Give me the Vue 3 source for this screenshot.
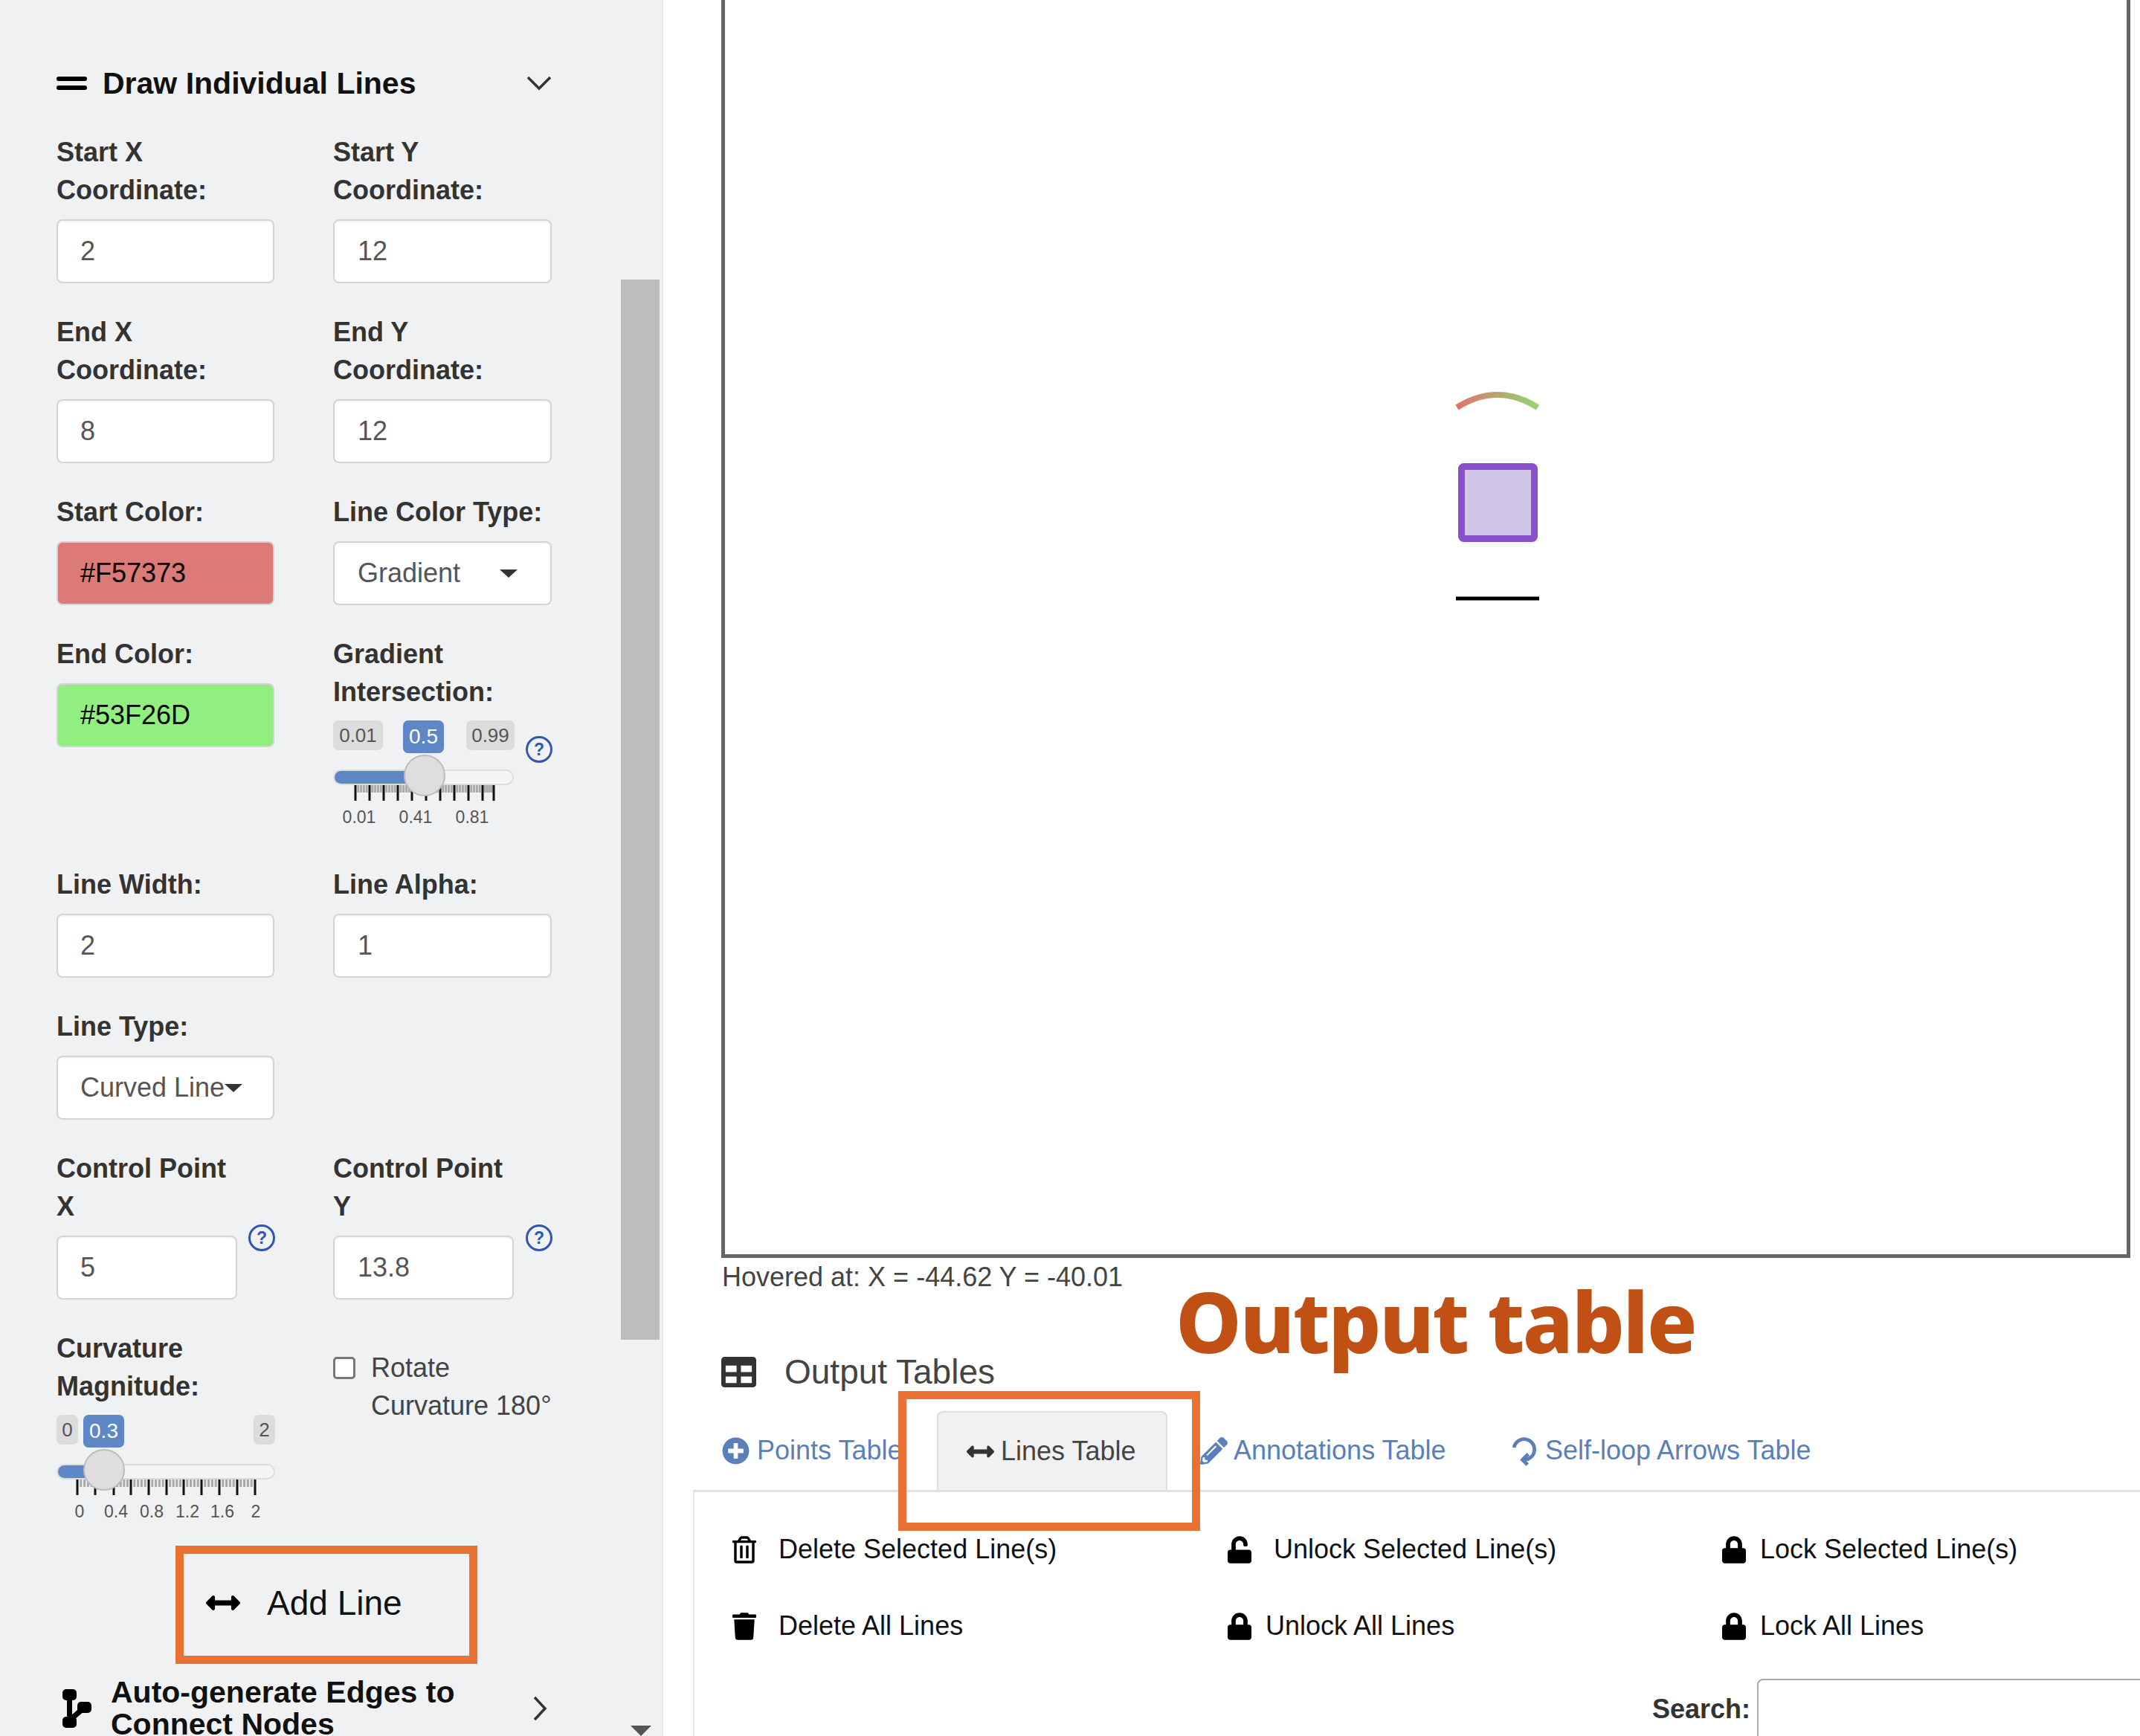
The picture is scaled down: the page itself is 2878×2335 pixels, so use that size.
<script setup>
const icons = {
  arrows: 'M377.941 169.941V216H134.059v-46.059c0-21.382-25.851-32.09-40.971-16.971L7.029 239.029c-9.373 9.373-9.373 24.568 0 33.941l86.059 86.059c15.119 15.119 40.971 4.411 40.971-16.971V296h243.882v46.059c0 21.382 25.851 32.09 40.971 16.971l86.059-86.059c9.373-9.373 9.373-24.568 0-33.941l-86.059-86.059c-15.119-15.12-40.971-4.412-40.971 16.97z',
  table: 'M464 32H48C21.49 32 0 53.49 0 80v352c0 26.51 21.49 48 48 48h416c26.51 0 48-21.49 48-48V80c0-26.51-21.49-48-48-48zM224 416H64v-96h160v96zm0-160H64v-96h160v96zm224 160H288v-96h160v96zm0-160H288v-96h160v96z',
  plus: 'M256 8C119 8 8 119 8 256s111 248 248 248 248-111 248-248S393 8 256 8zm144 276c0 6.6-5.4 12-12 12h-92v92c0 6.6-5.4 12-12 12h-56c-6.6 0-12-5.4-12-12v-92h-92c-6.6 0-12-5.4-12-12v-56c0-6.6 5.4-12 12-12h92v-92c0-6.6 5.4-12 12-12h56c6.6 0 12 5.4 12 12v92h92c6.6 0 12 5.4 12 12v56z',
  pencil: 'M497.9 142.1l-46.1 46.1c-4.7 4.7-12.3 4.7-17 0l-111-111c-4.7-4.7-4.7-12.3 0-17l46.1-46.1c18.7-18.7 49.1-18.7 67.9 0l60.1 60.1c18.8 18.7 18.8 49.1 0 67.9zM284.2 99.8L21.6 362.4.4 483.9c-2.9 16.4 11.4 30.6 27.8 27.8l121.5-21.3 262.6-262.6c4.7-4.7 4.7-12.3 0-17l-111-111c-4.8-4.7-12.4-4.7-17.1 0zM124.1 339.9c-5.5-5.5-5.5-14.3 0-19.8l154-154c5.5-5.5 14.3-5.5 19.8 0s5.5 14.3 0 19.8l-154 154c-5.5 5.5-14.3 5.5-19.8 0zM88 424h48v36.3l-64.5 11.3-31.1-31.1L51.7 376H88v48z',
  trash: 'M432 32H312l-9.4-18.7A24 24 0 0 0 281.1 0H166.8a23.72 23.72 0 0 0-21.4 13.3L136 32H16A16 16 0 0 0 0 48v32a16 16 0 0 0 16 16h416a16 16 0 0 0 16-16V48a16 16 0 0 0-16-16zM53.2 467a48 48 0 0 0 47.9 45h245.8a48 48 0 0 0 47.9-45L416 128H32z',
  trashO: 'M268 416h24a12 12 0 0 0 12-12V188a12 12 0 0 0-12-12h-24a12 12 0 0 0-12 12v216a12 12 0 0 0 12 12zM432 80h-82.41l-34-56.7A48 48 0 0 0 274.41 0H173.59a48 48 0 0 0-41.16 23.3L98.41 80H16A16 16 0 0 0 0 96v16a16 16 0 0 0 16 16h16v336a48 48 0 0 0 48 48h288a48 48 0 0 0 48-48V128h16a16 16 0 0 0 16-16V96a16 16 0 0 0-16-16zM171.84 50.91A6 6 0 0 1 177 48h94a6 6 0 0 1 5.15 2.91L293.61 80H154.39zM368 464H80V128h288zm-212-48h24a12 12 0 0 0 12-12V188a12 12 0 0 0-12-12h-24a12 12 0 0 0-12 12v216a12 12 0 0 0 12 12z',
  lock: 'M400 224h-24v-72C376 68.2 307.8 0 224 0S72 68.2 72 152v72H48c-26.5 0-48 21.5-48 48v192c0 26.5 21.5 48 48 48h352c26.5 0 48-21.5 48-48V272c0-26.5-21.5-48-48-48zm-104 0H152v-72c0-39.7 32.3-72 72-72s72 32.3 72 72v72z',
  unlock: 'M400 256H152V152.9c0-39.6 31.7-72.5 71.3-72.9 40-.4 72.7 32.1 72.7 72v16c0 13.3 10.7 24 24 24h32c13.3 0 24-10.7 24-24v-16C376 68 307.5-.3 223.5 0 139.5.3 72 69.5 72 153.5V256H48c-26.5 0-48 21.5-48 48v160c0 26.5 21.5 48 48 48h352c26.5 0 48-21.5 48-48V304c0-26.5-21.5-48-48-48z'
}

function minors(majors) {
  const out = []
  for (let i = 0; i < majors.length - 1; i++) {
    const step = (majors[i + 1] - majors[i]) / 5
    for (let j = 1; j < 5; j++) out.push(majors[i] + step * j)
  }
  return out
}

const gradMajors = [30, 49, 68, 87, 106, 125, 144, 163, 182, 201, 216]
const gradSlider = {
  width: 243, fill: 123, thumb: 95,
  badges: [
    { text: '0.01', left: 0, width: 67 },
    { text: '0.5', left: 94, width: 55, active: true },
    { text: '0.99', left: 179, width: 65 }
  ],
  majors: gradMajors, minors: minors(gradMajors),
  labels: [{ t: '0.01', x: 35 }, { t: '0.41', x: 111 }, { t: '0.81', x: 187 }]
}
const curvMajors = [28, 52, 77, 100, 124, 148, 171, 195, 219, 243, 267]
const curvSlider = {
  width: 294, fill: 64, thumb: 36,
  badges: [
    { text: '0', left: 0, width: 29 },
    { text: '0.3', left: 36, width: 55, active: true },
    { text: '2', left: 265, width: 29 }
  ],
  majors: curvMajors, minors: minors(curvMajors),
  labels: [{ t: '0', x: 31 }, { t: '0.4', x: 80 }, { t: '0.8', x: 128 }, { t: '1.2', x: 176 }, { t: '1.6', x: 223 }, { t: '2', x: 268 }]
}
const sliders = { gradSlider, curvSlider }
</script>

<template>
  <div class="page">
    <aside class="sidebar">
      <div class="scroll-thumb"></div>
      <div class="scroll-arrow"></div>

      <div class="section-head">
        <svg class="equals" viewBox="0 0 41 18"><rect x="0" y="0" width="41" height="6" rx="3" /><rect x="0" y="12" width="41" height="6" rx="3" /></svg>
        <span class="section-title">Draw Individual Lines</span>
        <svg class="chev-down" viewBox="0 0 34 20"><path d="M2 2 L17 17 L32 2" /></svg>
      </div>

      <div class="row first">
        <div><div class="label">Start X<br />Coordinate:</div><div class="field">2</div></div>
        <div class="col-two"><div class="label">Start Y<br />Coordinate:</div><div class="field">12</div></div>
      </div>
      <div class="row">
        <div><div class="label">End X<br />Coordinate:</div><div class="field">8</div></div>
        <div class="col-two"><div class="label">End Y<br />Coordinate:</div><div class="field">12</div></div>
      </div>
      <div class="row">
        <div><div class="label">Start Color:</div><div class="field color red">#F57373</div></div>
        <div class="col-two">
          <div class="label">Line Color Type:</div>
          <div class="field select"><span>Gradient</span><i class="caret far"></i></div>
        </div>
      </div>
      <div class="row">
        <div><div class="label">End Color:</div><div class="field color green">#53F26D</div></div>
        <div>
          <div class="label">Gradient<br />Intersection:</div>
          <div class="with-help slider-wrap">
            <div class="slider" :style="{ width: sliders.gradSlider.width + 'px' }">
              <span v-for="b in sliders.gradSlider.badges" :key="b.text" class="badge" :class="{ active: b.active }" :style="{ left: b.left + 'px', width: b.width + 'px' }">{{ b.text }}</span>
              <div class="track"><div class="fill" :style="{ width: sliders.gradSlider.fill + 'px' }"></div></div>
              <svg class="ticks" :width="sliders.gradSlider.width" height="21">
                <line v-for="x in sliders.gradSlider.minors" :key="x" :x1="x" :x2="x" y1="0" y2="10" class="minor" />
                <line v-for="x in sliders.gradSlider.majors" :key="x" :x1="x" :x2="x" y1="0" y2="21" class="major" />
              </svg>
              <div class="thumb" :style="{ left: sliders.gradSlider.thumb + 'px' }"></div>
              <span v-for="l in sliders.gradSlider.labels" :key="l.t" class="tick-label" :style="{ left: l.x + 'px' }">{{ l.t }}</span>
            </div>
            <span class="help slider-help">?</span>
          </div>
        </div>
      </div>
      <div class="row">
        <div><div class="label">Line Width:</div><div class="field">2</div></div>
        <div class="col-two"><div class="label">Line Alpha:</div><div class="field">1</div></div>
      </div>
      <div class="row">
        <div>
          <div class="label">Line Type:</div>
          <div class="field select tight"><span>Curved Line</span><i class="caret"></i></div>
        </div>
        <div></div>
      </div>
      <div class="row">
        <div>
          <div class="label">Control Point<br />X</div>
          <div class="with-help"><div class="field short">5</div><span class="help input-help">?</span></div>
        </div>
        <div class="col-two">
          <div class="label">Control Point<br />Y</div>
          <div class="with-help"><div class="field short">13.8</div><span class="help input-help">?</span></div>
        </div>
      </div>
      <div class="row">
        <div>
          <div class="label">Curvature<br />Magnitude:</div>
          <div class="slider curv" :style="{ width: sliders.curvSlider.width + 'px' }">
            <span v-for="b in sliders.curvSlider.badges" :key="b.text" class="badge" :class="{ active: b.active }" :style="{ left: b.left + 'px', width: b.width + 'px' }">{{ b.text }}</span>
            <div class="track"><div class="fill" :style="{ width: sliders.curvSlider.fill + 'px' }"></div></div>
            <svg class="ticks" :width="sliders.curvSlider.width" height="21">
              <line v-for="x in sliders.curvSlider.minors" :key="x" :x1="x" :x2="x" y1="0" y2="10" class="minor" />
              <line v-for="x in sliders.curvSlider.majors" :key="x" :x1="x" :x2="x" y1="0" y2="21" class="major" />
            </svg>
            <div class="thumb" :style="{ left: sliders.curvSlider.thumb + 'px' }"></div>
            <span v-for="l in sliders.curvSlider.labels" :key="l.t" class="tick-label" :style="{ left: l.x + 'px' }">{{ l.t }}</span>
          </div>
        </div>
        <div class="check-row">
          <span class="checkbox"></span>
          <span class="check-text">Rotate<br />Curvature 180°</span>
        </div>
      </div>

      <div class="add-line">
        <svg class="add-icon" viewBox="0 0 512 512"><path :d="icons.arrows" /></svg>
        <span>Add Line</span>
      </div>

      <div class="auto-head">
        <svg class="branch" viewBox="0 0 40 52">
          <rect x="1" y="0" width="19" height="15" rx="5" />
          <rect x="1" y="37" width="19" height="15" rx="5" />
          <rect x="21" y="17" width="19" height="15" rx="5" />
          <path d="M10.5 8 V44 M10.5 42 L30 25" class="branch-line" />
        </svg>
        <span class="auto-title">Auto-generate Edges to<br />Connect Nodes</span>
        <svg class="chev-right" viewBox="0 0 20 34"><path d="M3 2 L17 17 L3 32" /></svg>
      </div>
    </aside>

    <main class="main">
      <div class="canvas">
        <svg class="plot" viewBox="975 0 1885 1687" width="1885" height="1687">
          <defs>
            <linearGradient id="curveGrad" gradientUnits="userSpaceOnUse" x1="1958" y1="0" x2="2069" y2="0">
              <stop offset="0" stop-color="#e0736d" />
              <stop offset="1" stop-color="#8fd873" />
            </linearGradient>
          </defs>
          <path d="M1959.5 548 Q2013.5 514 2068 548" fill="none" stroke="url(#curveGrad)" stroke-width="8" />
          <rect x="1965.5" y="627.5" width="98" height="97" rx="3" fill="#cfc6ea" stroke="#8a4fcb" stroke-width="9" />
          <line x1="1958" y1="805" x2="2070" y2="805" stroke="#000" stroke-width="5" />
        </svg>
      </div>
      <div class="hover-text">Hovered at: X = -44.62 Y = -40.01</div>

      <div class="tables-head">
        <svg class="table-icon" viewBox="0 0 512 512"><path :d="icons.table" /></svg>
        <span>Output Tables</span>
      </div>

      <div class="tabs">
        <div class="tab t-points">
          <svg class="tab-icon" viewBox="0 0 512 512"><path :d="icons.plus" /></svg>
          <span>Points Table</span>
        </div>
        <div class="tab t-lines">
          <svg class="tab-icon" viewBox="0 0 512 512"><path :d="icons.arrows" /></svg>
          <span>Lines Table</span>
        </div>
        <div class="tab t-annot">
          <svg class="tab-icon" viewBox="0 0 512 512"><path :d="icons.pencil" /></svg>
          <span>Annotations Table</span>
        </div>
        <div class="tab t-loop">
          <svg class="tab-icon loop" viewBox="0 0 34 44"><path d="M3 18 A14.5 14.5 0 1 1 17 35" /><path d="M23 27 L15 35 L22 42" /></svg>
          <span>Self-loop Arrows Table</span>
        </div>
      </div>

      <div class="panel">
        <div class="actions">
          <div class="action wide"><svg class="a-icon" viewBox="0 0 448 512"><path :d="icons.trashO" /></svg><span>Delete Selected Line(s)</span></div>
          <div class="action wide"><svg class="a-icon" viewBox="0 0 448 512"><path :d="icons.unlock" /></svg><span>Unlock Selected Line(s)</span></div>
          <div class="action"><svg class="a-icon" viewBox="0 0 448 512"><path :d="icons.lock" /></svg><span>Lock Selected Line(s)</span></div>
          <div class="action wide"><svg class="a-icon" viewBox="0 0 448 512"><path :d="icons.trash" /></svg><span>Delete All Lines</span></div>
          <div class="action"><svg class="a-icon" viewBox="0 0 448 512"><path :d="icons.lock" /></svg><span>Unlock All Lines</span></div>
          <div class="action"><svg class="a-icon" viewBox="0 0 448 512"><path :d="icons.lock" /></svg><span>Lock All Lines</span></div>
        </div>
        <div class="search">
          <span class="search-label">Search:</span>
          <div class="search-box"></div>
        </div>
      </div>

      <div class="callout-title">Output table</div>
      <div class="callout-box"></div>
    </main>
  </div>
</template>

<style>
html, body { margin: 0; overflow: hidden; background: #fff; }
</style>

<style scoped>
.page {
  display: flex;
  width: 2878px;
  height: 2335px;
  overflow: hidden;
  font-family: "Liberation Sans", Arial, sans-serif;
  font-size: 36px;
  color: #333;
}
.sidebar {
  position: relative;
  box-sizing: border-box;
  flex: 0 0 892px;
  height: 2335px;
  padding: 84px 0 0 76px;
  background: #f0f1f3;
  border-right: 2px solid #e8e9eb;
  overflow: hidden;
}
.scroll-thumb {
  position: absolute;
  left: 835px;
  top: 376px;
  width: 52px;
  height: 1426px;
  background: #bdbdbd;
}
.scroll-arrow {
  position: absolute;
  left: 848px;
  top: 2321px;
  border-left: 14px solid transparent;
  border-right: 14px solid transparent;
  border-top: 14px solid #555;
}
.section-head {
  display: flex;
  align-items: center;
  width: 666px;
  height: 56px;
}
.equals { width: 41px; height: 18px; fill: #000; margin-right: 21px; }
.section-title { font-size: 41px; font-weight: 700; color: #111; flex: 1; }
.chev-down { width: 34px; height: 20px; }
.chev-down path, .chev-right path { fill: none; stroke: #333; stroke-width: 3.5; }

.row {
  display: grid;
  grid-template-columns: 293px 294px;
  column-gap: 79px;
  margin-top: 40px;
}
.row.first { margin-top: 39px; }
.label {
  font-weight: 700;
  line-height: 51px;
  margin-bottom: 14px;
  white-space: nowrap;
}
.field {
  box-sizing: border-box;
  height: 86px;
  padding-left: 30px;
  display: flex;
  align-items: center;
  background: #fff;
  border: 2px solid #d4d4d4;
  border-radius: 8px;
  box-shadow: inset 0 2px 2px rgba(0, 0, 0, 0.04);
  color: #555;
}
.col-two .field { padding-left: 31px; }
.field.color { color: #000; box-shadow: none; }
.field.red { background: #db7a76; }
.field.green { background: #91ef80; }
.field.short { width: 243px; }
.field.select { color: #555; }
.caret {
  border-left: 12px solid transparent;
  border-right: 12px solid transparent;
  border-top: 11px solid #333;
  margin-left: 0;
}
.caret.far { margin-left: 53px; }
.with-help { display: flex; align-items: flex-start; justify-content: space-between; }
.help {
  box-sizing: border-box;
  flex: none;
  display: flex;
  align-items: center;
  justify-content: center;
  width: 36px;
  height: 36px;
  border: 3px solid #2f58ad;
  border-radius: 50%;
  color: #2f58ad;
  font-size: 23px;
  font-weight: 700;
}
.input-help { margin: -15px -1px 0 0; }
.slider-help { margin: 21px -1px 0 0; }

.slider-wrap { margin-top: -1px; }
.slider {
  position: relative;
  height: 155px;
}
.slider.curv { height: 147px; margin-top: -1px; }
.badge {
  position: absolute;
  top: 0;
  height: 40px;
  display: flex;
  align-items: center;
  justify-content: center;
  background: #dcdcdc;
  border-radius: 7px;
  font-size: 26px;
  color: #555;
}
.badge.active {
  height: 44px;
  background: #5d87c5;
  color: #fff;
  font-size: 28px;
}
.track {
  position: absolute;
  left: 0;
  right: 0;
  top: 66px;
  height: 21px;
  box-sizing: border-box;
  background: #f5f5f5;
  border: 2px solid #dcdcdc;
  border-radius: 11px;
  overflow: hidden;
}
.fill { height: 100%; background: #5d87c5; }
.ticks { position: absolute; left: 0; top: 87px; }
.major { stroke: #111; stroke-width: 3; }
.minor { stroke: #aaa; stroke-width: 3; }
.thumb {
  position: absolute;
  top: 46px;
  width: 56px;
  height: 56px;
  box-sizing: border-box;
  background: #dedede;
  border: 2px solid #bcbcbc;
  border-radius: 50%;
}
.tick-label {
  position: absolute;
  top: 116px;
  transform: translateX(-50%);
  font-size: 23px;
  line-height: 28px;
  color: #555;
}

.check-row { display: flex; align-items: flex-start; gap: 21px; padding-top: 26px; }
.checkbox {
  box-sizing: border-box;
  flex: none;
  width: 30px;
  height: 30px;
  margin-top: 11px;
  background: #fff;
  border: 3px solid #777;
  border-radius: 5px;
}
.check-text { line-height: 51px; white-space: nowrap; color: #444; }

.add-line {
  box-sizing: border-box;
  display: flex;
  align-items: center;
  width: 406px;
  height: 159px;
  margin: 29px 0 0 160px;
  padding: 0 0 6px 30px;
  border: 11px solid #e97132;
  font-size: 46px;
  color: #111;
}
.add-icon { width: 46px; height: 46px; fill: #000; margin-right: 36px; }

.auto-head {
  display: flex;
  align-items: center;
  width: 653px;
  margin: 17px 0 0 7px;
}
.branch { width: 40px; height: 52px; margin-right: 26px; fill: #000; flex: none; }
.branch-line { fill: none; stroke: #000; stroke-width: 7; }
.auto-title { font-size: 41px; font-weight: 700; line-height: 43px; color: #111; flex: 1; white-space: nowrap; }
.chev-right { width: 20px; height: 34px; }

.main {
  position: relative;
  flex: 1;
  min-width: 0;
  background: #fff;
  color: #444;
}
.canvas {
  box-sizing: border-box;
  position: relative;
  height: 1692px;
  margin: 0 13px 0 78px;
  border: 5px solid #666;
  border-top: none;
  background: #fff;
}
.plot { position: absolute; left: 0; top: 0; }
.hover-text {
  margin: 6px 0 0 79px;
  line-height: 40px;
  color: #444;
}
.tables-head {
  display: flex;
  align-items: center;
  height: 50px;
  margin: 82px 0 2px 78px;
  font-size: 46px;
  color: #444;
}
.table-icon { width: 47px; height: 47px; fill: #333; margin-right: 38px; }
.tabs {
  display: flex;
  align-items: stretch;
  height: 106px;
  margin: 28px 0 0 40px;
  padding-left: 39px;
}
.tab {
  display: flex;
  align-items: center;
  color: #5b7fb8;
  white-space: nowrap;
}
.tab-icon { flex: none; fill: currentColor; }
.t-points { width: 289px; }
.t-points .tab-icon { width: 37px; height: 37px; margin-right: 10px; }
.t-lines {
  box-sizing: border-box;
  width: 310px;
  padding-left: 38px;
  background: #f0f1f3;
  border: 2px solid #dedede;
  border-bottom: none;
  border-radius: 8px 8px 0 0;
  color: #444;
}
.t-lines .tab-icon { width: 37px; height: 37px; margin-right: 9px; fill: #333; }
.t-annot { width: 419px; margin-left: 44px; }
.t-annot .tab-icon { width: 37px; height: 37px; margin-right: 8px; }
.t-loop .tab-icon { width: 33px; height: 42px; margin-right: 12px; }
.loop path { fill: none; stroke: #5b7fb8; stroke-width: 5; }

.panel {
  box-sizing: border-box;
  height: 340px;
  margin-left: 40px;
  border-top: 3px solid #e0e0e0;
  border-left: 2px solid #e6e6e6;
  padding: 0 0 0 51px;
}
.actions {
  display: grid;
  grid-template-columns: 666px 665px 1fr;
  grid-auto-rows: 103px;
  padding-top: 52px;
}
.action { display: flex; align-items: center; gap: 19px; color: #111; white-space: nowrap; height: 50px; }
.action.wide { gap: 30px; }
.a-icon { width: 32px; height: 37px; fill: #000; flex: none; }
.search {
  display: flex;
  align-items: flex-start;
  margin: -7px 0 0 1237px;
}
.search-label { font-weight: 700; line-height: 50px; margin: 16px 9px 0 0; color: #333; white-space: nowrap; }
.search-box {
  box-sizing: border-box;
  width: 530px;
  height: 220px;
  background: #fff;
  border: 2px solid #aaa;
  border-radius: 8px;
  flex: none;
}

.callout-title {
  position: absolute;
  left: 689px;
  top: 1712px;
  font-family: "Noto Sans", sans-serif;
  font-size: 112px;
  font-weight: 800;
  line-height: 130px;
  letter-spacing: -2.5px;
  color: #c05014;
  white-space: nowrap;
}
.callout-box {
  position: absolute;
  left: 316px;
  top: 1871px;
  width: 406px;
  height: 188px;
  box-sizing: border-box;
  border: 11px solid #e97132;
}
</style>
